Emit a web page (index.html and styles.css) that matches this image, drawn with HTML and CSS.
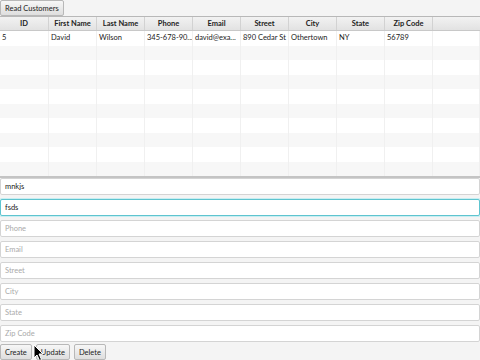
FILE: index.html
```html
<!DOCTYPE html>
<html>
<head>
<meta charset="utf-8">
<link rel="stylesheet" href="styles.css">
</head>
<body>
<div class="app">
  <div class="toolbar"><button class="btn">Read Customers</button></div>
  <div class="table">
    <div class="head">
      <div class="hc">ID</div><div class="hc">First Name</div><div class="hc">Last Name</div><div class="hc">Phone</div><div class="hc">Email</div><div class="hc">Street</div><div class="hc">City</div><div class="hc">State</div><div class="hc">Zip Code</div><div class="hc filler"></div>
    </div>
    <div class="body">
      <div class="row"><div class="c">5</div><div class="c">David</div><div class="c">Wilson</div><div class="c">345-678-90...</div><div class="c">david@exa...</div><div class="c">890 Cedar St</div><div class="c">Othertown</div><div class="c">NY</div><div class="c">56789</div><div class="c"></div></div>
      <div class="row"><div class="c"></div><div class="c"></div><div class="c"></div><div class="c"></div><div class="c"></div><div class="c"></div><div class="c"></div><div class="c"></div><div class="c"></div><div class="c"></div></div>
      <div class="row"><div class="c"></div><div class="c"></div><div class="c"></div><div class="c"></div><div class="c"></div><div class="c"></div><div class="c"></div><div class="c"></div><div class="c"></div><div class="c"></div></div>
      <div class="row"><div class="c"></div><div class="c"></div><div class="c"></div><div class="c"></div><div class="c"></div><div class="c"></div><div class="c"></div><div class="c"></div><div class="c"></div><div class="c"></div></div>
      <div class="row"><div class="c"></div><div class="c"></div><div class="c"></div><div class="c"></div><div class="c"></div><div class="c"></div><div class="c"></div><div class="c"></div><div class="c"></div><div class="c"></div></div>
      <div class="row"><div class="c"></div><div class="c"></div><div class="c"></div><div class="c"></div><div class="c"></div><div class="c"></div><div class="c"></div><div class="c"></div><div class="c"></div><div class="c"></div></div>
      <div class="row"><div class="c"></div><div class="c"></div><div class="c"></div><div class="c"></div><div class="c"></div><div class="c"></div><div class="c"></div><div class="c"></div><div class="c"></div><div class="c"></div></div>
      <div class="row"><div class="c"></div><div class="c"></div><div class="c"></div><div class="c"></div><div class="c"></div><div class="c"></div><div class="c"></div><div class="c"></div><div class="c"></div><div class="c"></div></div>
      <div class="row"><div class="c"></div><div class="c"></div><div class="c"></div><div class="c"></div><div class="c"></div><div class="c"></div><div class="c"></div><div class="c"></div><div class="c"></div><div class="c"></div></div>
      <div class="row"><div class="c"></div><div class="c"></div><div class="c"></div><div class="c"></div><div class="c"></div><div class="c"></div><div class="c"></div><div class="c"></div><div class="c"></div><div class="c"></div></div>
    </div>
  </div>
  <div class="form">
    <div class="field">mnkjs</div>
    <div class="field focused">fsds</div>
    <div class="field ph">Phone</div>
    <div class="field ph">Email</div>
    <div class="field ph">Street</div>
    <div class="field ph">City</div>
    <div class="field ph">State</div>
    <div class="field ph">Zip Code</div>
  </div>
  <div class="actions">
    <button class="btn">Create</button>
    <button class="btn">Update</button>
    <button class="btn">Delete</button>
  </div>
  <svg class="cursor" width="12" height="18" viewBox="0 0 12 18"><path d="M1 1 L1 14 L4 11 L6.5 16.5 L8.5 15.5 L6 10 L10 10 Z" fill="#000" stroke="#fff" stroke-width="1"/></svg>
</div>
</body>
</html>
```
FILE: styles.css
```css
html, body { margin: 0; padding: 0; }
body {
  width: 480px; height: 360px; overflow: hidden;
  background: #f4f4f4;
  font-family: Lato, "Open Sans", sans-serif;
  font-size: 7.5px;
  color: #222;
}
.app { position: relative; display: flex; flex-direction: column; height: 360px; }
.app > * { flex-shrink: 0; }
.toolbar { display: flex; height: 16px; }
.btn {
  font-family: inherit; font-size: 7.5px; color: #222;
  height: 16px; padding: 0 4px; margin: 0;
  border: 1px solid #b8b8b8; border-radius: 2px;
  background: linear-gradient(#f7f7f7, #dedede);
  line-height: 13px;
}
.table {
  box-sizing: border-box;
  background: #fff;
  border-top: 1px solid #b8b8b8;
  border-bottom: 2px solid #c4c4c4;
  height: 162px;
  display: flex; flex-direction: column;
  overflow: hidden;
}
.head, .row {
  display: grid;
  grid-template-columns: 49px 48px 48px 48px 48px 48px 48px 48px 48px 1fr;
}
.head {
  height: 13px; flex-shrink: 0;
  background: linear-gradient(#f2f2f2, #e2e2e2);
  border-bottom: 1px solid #c8c8c8;
}
.hc {
  font-weight: bold; text-align: center; line-height: 13px;
  border-right: 1px solid #d2d2d2;
  white-space: nowrap; overflow: hidden;
}
.hc.filler { border-right: none; }
.row { height: 14.5px; }
.row:nth-child(even) { background: #f7f7f7; }
.c {
  border-right: 1px solid #f0f0f0;
  line-height: 14px; padding-left: 2px;
  white-space: nowrap; overflow: hidden;
}
.form { display: flex; flex-direction: column; gap: 4px; }
.field {
  box-sizing: border-box;
  height: 17px; line-height: 15px;
  background: #fff;
  border: 1px solid #d4d4d4;
  border-radius: 2px;
  padding-left: 4px;
  color: #222;
}
.field.focused {
  border: 1px solid #5ec4cf;
  box-shadow: 0 0 0 1px #c9eef2;
}
.field.ph { color: #aaa; }
.actions { display: flex; gap: 4px; margin-top: 2px; }
.cursor { position: absolute; left: 33px; top: 344px; }
```
